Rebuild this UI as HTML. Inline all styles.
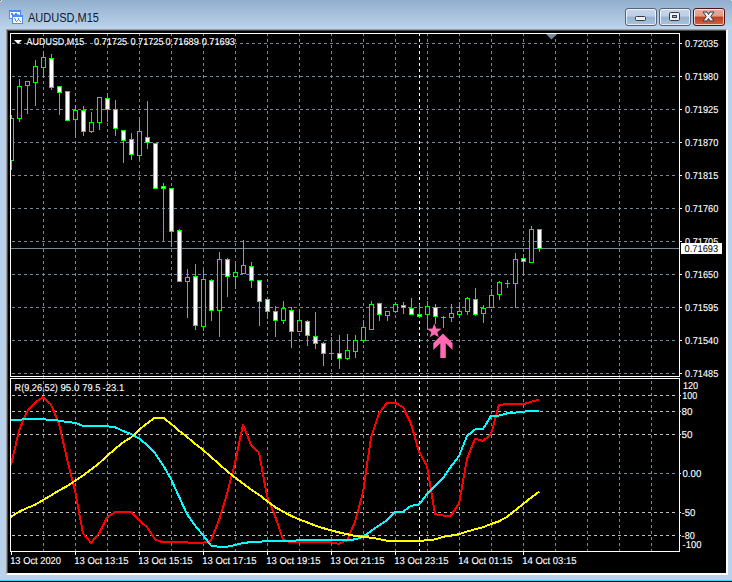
<!DOCTYPE html>
<html><head><meta charset="utf-8"><style>
html,body{margin:0;padding:0;}
body{width:732px;height:582px;overflow:hidden;position:relative;background:#b9d1ea;font-family:"Liberation Sans",sans-serif;}
#title{position:absolute;left:0;top:0;width:732px;height:29px;background:linear-gradient(#92aece,#bcd4ec);}
#ttext{position:absolute;left:28px;top:9px;font-size:12px;color:#1e2a44;letter-spacing:0.2px;}
#frame{position:absolute;left:6px;top:29px;width:719px;height:543px;border-top:1px solid #9a9a9a;border-left:1px solid #9a9a9a;border-right:2px solid #fff;border-bottom:2px solid #fff;background:#000;box-sizing:content-box;box-shadow:inset 1px 1px 0 #4a4a4a;}
.btn{position:absolute;top:8px;width:30px;height:16px;border:1px solid #56627c;border-radius:3px;box-shadow:inset 0 0 0 1px rgba(255,255,255,0.7);background:linear-gradient(#c6d7ea 0%,#bccfe6 45%,#98b2cf 50%,#a9c2dc 100%);}
#bclose{border-color:#4e1418;background:linear-gradient(#eaac9c 0%,#e29a88 45%,#c0401f 50%,#d06448 100%);}
#bottom1{position:absolute;left:0;top:580px;width:732px;height:1px;background:#34d6ee;}
#bottom2{position:absolute;left:0;top:581px;width:732px;height:1px;background:#000;}
</style></head><body>
<div id="title"></div>
<svg style="position:absolute;left:0;top:0" width="30" height="30" shape-rendering="crispEdges">
<rect x="9" y="10" width="12" height="9" fill="#4b8cf2"/>
<rect x="10" y="12" width="10" height="6" fill="#fffff4"/>
<rect x="11" y="13" width="2" height="2" fill="#4b8cf2"/><rect x="15" y="13" width="2" height="2" fill="#4b8cf2"/><rect x="13" y="14" width="2" height="1" fill="#8fb6f2"/><rect x="17" y="14" width="2" height="1" fill="#8fb6f2"/>
<rect x="12" y="15" width="11" height="9" fill="#4b8cf2"/>
<rect x="13" y="17" width="9" height="6" fill="#ffffff"/>
<path d="M14 18h1v1h1v2h1v-1h1v-2h1v2h1v1h1v1h-1v-1h-1v-1h-1v1h-1v1h-1v-1h-1v-2h-1z" fill="#4b8cf2"/>
</svg>
<svg style="position:absolute;left:0;top:0" width="120" height="29"><text x="28" y="22" font-family="Liberation Sans, sans-serif" font-size="12.4" fill="#0c1a30" textLength="71" lengthAdjust="spacingAndGlyphs">AUDUSD,M15</text></svg>
<div class="btn" style="left:625px"><svg width="30" height="16" style="position:absolute;left:0;top:0"><rect x="9.5" y="7.5" width="10" height="4" rx="1" fill="#f0f0f0" stroke="#343c4e"/></svg></div>
<div class="btn" style="left:659px"><svg width="30" height="16" style="position:absolute;left:0;top:0"><rect x="9.5" y="3.5" width="10" height="8" rx="1.2" fill="#f0f0f0" stroke="#343c4e"/><rect x="12.5" y="6.5" width="4" height="2" fill="#9bb3d0" stroke="#343c4e"/></svg></div>
<div class="btn" id="bclose" style="left:693px"><svg width="30" height="16" style="position:absolute;left:0;top:0"><polygon points="9,3 13,3 14.5,5.5 16,3 20,3 16.7,7.5 20,12 16,12 14.5,9.5 13,12 9,12 12.3,7.5" fill="#f2f2f2" stroke="#2e3a4e" stroke-width="1" stroke-linejoin="round"/></svg></div>
<div id="frame"></div>
<svg width="718" height="542" viewBox="7 30 718 542" style="position:absolute;left:7px;top:30px"><defs><clipPath id="cm"><rect x="11" y="34" width="668" height="342"/></clipPath><clipPath id="ci"><rect x="11" y="379" width="668" height="172"/></clipPath></defs><g stroke="#778899" stroke-width="1" stroke-dasharray="3 3" shape-rendering="crispEdges"><line x1="12" y1="43.5" x2="678" y2="43.5"/><line x1="12" y1="76.5" x2="678" y2="76.5"/><line x1="12" y1="109.5" x2="678" y2="109.5"/><line x1="12" y1="142.5" x2="678" y2="142.5"/><line x1="12" y1="175.5" x2="678" y2="175.5"/><line x1="12" y1="208.5" x2="678" y2="208.5"/><line x1="12" y1="241.5" x2="678" y2="241.5"/><line x1="12" y1="274.5" x2="678" y2="274.5"/><line x1="12" y1="307.5" x2="678" y2="307.5"/><line x1="12" y1="340.5" x2="678" y2="340.5"/><line x1="12" y1="373.5" x2="678" y2="373.5"/><line x1="43.5" y1="33" x2="43.5" y2="551"/><line x1="75.5" y1="33" x2="75.5" y2="551"/><line x1="107.5" y1="33" x2="107.5" y2="551"/><line x1="139.5" y1="33" x2="139.5" y2="551"/><line x1="171.5" y1="33" x2="171.5" y2="551"/><line x1="203.5" y1="33" x2="203.5" y2="551"/><line x1="235.5" y1="33" x2="235.5" y2="551"/><line x1="267.5" y1="33" x2="267.5" y2="551"/><line x1="299.5" y1="33" x2="299.5" y2="551"/><line x1="331.5" y1="33" x2="331.5" y2="551"/><line x1="363.5" y1="33" x2="363.5" y2="551"/><line x1="395.5" y1="33" x2="395.5" y2="551"/><line x1="427.5" y1="33" x2="427.5" y2="551"/><line x1="459.5" y1="33" x2="459.5" y2="551"/><line x1="491.5" y1="33" x2="491.5" y2="551"/><line x1="523.5" y1="33" x2="523.5" y2="551"/><line x1="555.5" y1="33" x2="555.5" y2="551"/><line x1="587.5" y1="33" x2="587.5" y2="551"/><line x1="619.5" y1="33" x2="619.5" y2="551"/><line x1="651.5" y1="33" x2="651.5" y2="551"/></g><g stroke="#778899" stroke-width="1" stroke-dasharray="3 3" shape-rendering="crispEdges"><line x1="12" y1="473.5" x2="678" y2="473.5"/></g><g stroke="#c0c0c0" stroke-width="1" stroke-dasharray="3 3" shape-rendering="crispEdges"><line x1="12" y1="395.5" x2="678" y2="395.5"/><line x1="12" y1="411.5" x2="678" y2="411.5"/><line x1="12" y1="434.5" x2="678" y2="434.5"/><line x1="12" y1="512.5" x2="678" y2="512.5"/><line x1="12" y1="535.5" x2="678" y2="535.5"/></g><g stroke="#ffffff" stroke-width="1" stroke-dasharray="3 3" shape-rendering="crispEdges"><line x1="419.5" y1="33" x2="419.5" y2="376"/><line x1="419.5" y1="381" x2="419.5" y2="551"/></g><line x1="11" y1="248.5" x2="679" y2="248.5" stroke="#778899" stroke-width="1" shape-rendering="crispEdges"/><polygon points="546,34 557,34 551.5,39.5" fill="#778899"/><g clip-path="url(#cm)" shape-rendering="crispEdges"><rect x="11" y="115" width="1" height="55" fill="#00ff00"/><rect x="9.5" y="118.5" width="4" height="42" fill="#000000" stroke="#00ff00" stroke-width="1"/><rect x="19" y="79" width="1" height="43" fill="#00ff00"/><rect x="17.5" y="86.5" width="4" height="32" fill="#000000" stroke="#00ff00" stroke-width="1"/><rect x="27" y="81" width="1" height="33" fill="#00ff00"/><rect x="25.5" y="81.5" width="4" height="4" fill="#000000" stroke="#00ff00" stroke-width="1"/><rect x="35" y="60" width="1" height="46" fill="#00ff00"/><rect x="33.5" y="66.5" width="4" height="16" fill="#000000" stroke="#00ff00" stroke-width="1"/><rect x="43" y="51" width="1" height="27" fill="#00ff00"/><rect x="41.5" y="57.5" width="4" height="10" fill="#000000" stroke="#00ff00" stroke-width="1"/><rect x="51" y="54" width="1" height="36" fill="#00ff00"/><rect x="49.5" y="58.5" width="4" height="29" fill="#ffffff" stroke="#00ff00" stroke-width="1"/><rect x="59" y="86" width="1" height="29" fill="#00ff00"/><rect x="57.5" y="86.5" width="4" height="6" fill="#ffffff" stroke="#00ff00" stroke-width="1"/><rect x="67" y="91" width="1" height="30" fill="#00ff00"/><rect x="65.5" y="91.5" width="4" height="29" fill="#ffffff" stroke="#00ff00" stroke-width="1"/><rect x="75" y="105" width="1" height="33" fill="#00ff00"/><rect x="73.5" y="110.5" width="4" height="9" fill="#000000" stroke="#00ff00" stroke-width="1"/><rect x="83" y="106" width="1" height="30" fill="#00ff00"/><rect x="81.5" y="110.5" width="4" height="21" fill="#ffffff" stroke="#00ff00" stroke-width="1"/><rect x="91" y="112" width="1" height="21" fill="#00ff00"/><rect x="89.5" y="122.5" width="4" height="9" fill="#000000" stroke="#00ff00" stroke-width="1"/><rect x="99" y="97" width="1" height="33" fill="#00ff00"/><rect x="97.5" y="97.5" width="4" height="25" fill="#000000" stroke="#00ff00" stroke-width="1"/><rect x="107" y="93" width="1" height="29" fill="#00ff00"/><rect x="105.5" y="98.5" width="4" height="11" fill="#ffffff" stroke="#00ff00" stroke-width="1"/><rect x="115" y="100" width="1" height="36" fill="#00ff00"/><rect x="113.5" y="109.5" width="4" height="19" fill="#ffffff" stroke="#00ff00" stroke-width="1"/><rect x="123" y="130" width="1" height="33" fill="#00ff00"/><rect x="121.5" y="130.5" width="4" height="10" fill="#ffffff" stroke="#00ff00" stroke-width="1"/><rect x="131" y="133" width="1" height="27" fill="#00ff00"/><rect x="129.5" y="139.5" width="4" height="15" fill="#ffffff" stroke="#00ff00" stroke-width="1"/><rect x="139" y="117" width="1" height="43" fill="#00ff00"/><rect x="137.5" y="131.5" width="4" height="24" fill="#000000" stroke="#00ff00" stroke-width="1"/><rect x="147" y="101" width="1" height="48" fill="#00ff00"/><rect x="145.5" y="137.5" width="4" height="5" fill="#ffffff" stroke="#00ff00" stroke-width="1"/><rect x="155" y="143" width="1" height="46" fill="#00ff00"/><rect x="153.5" y="143.5" width="4" height="45" fill="#ffffff" stroke="#00ff00" stroke-width="1"/><rect x="163" y="183" width="1" height="58" fill="#00ff00"/><rect x="161.5" y="186.5" width="4" height="2" fill="#ffffff" stroke="#00ff00" stroke-width="1"/><rect x="171" y="188" width="1" height="59" fill="#00ff00"/><rect x="169.5" y="188.5" width="4" height="43" fill="#ffffff" stroke="#00ff00" stroke-width="1"/><rect x="179" y="229" width="1" height="53" fill="#00ff00"/><rect x="177.5" y="230.5" width="4" height="51" fill="#ffffff" stroke="#00ff00" stroke-width="1"/><rect x="187" y="269" width="1" height="49" fill="#00ff00"/><rect x="185.5" y="277.5" width="4" height="4" fill="#000000" stroke="#00ff00" stroke-width="1"/><rect x="195" y="264" width="1" height="66" fill="#00ff00"/><rect x="193.5" y="276.5" width="4" height="49" fill="#ffffff" stroke="#00ff00" stroke-width="1"/><rect x="203" y="270" width="1" height="61" fill="#00ff00"/><rect x="201.5" y="279.5" width="4" height="47" fill="#000000" stroke="#00ff00" stroke-width="1"/><rect x="211" y="279" width="1" height="42" fill="#00ff00"/><rect x="209.5" y="280.5" width="4" height="30" fill="#ffffff" stroke="#00ff00" stroke-width="1"/><rect x="219" y="252" width="1" height="85" fill="#00ff00"/><rect x="217.5" y="259.5" width="4" height="51" fill="#000000" stroke="#00ff00" stroke-width="1"/><rect x="227" y="258" width="1" height="39" fill="#00ff00"/><rect x="225.5" y="259.5" width="4" height="17" fill="#ffffff" stroke="#00ff00" stroke-width="1"/><rect x="235" y="264" width="1" height="25" fill="#00ff00"/><rect x="233.5" y="272.5" width="4" height="4" fill="#000000" stroke="#00ff00" stroke-width="1"/><rect x="243" y="240" width="1" height="34" fill="#00ff00"/><rect x="241.5" y="265.5" width="4" height="8" fill="#000000" stroke="#00ff00" stroke-width="1"/><rect x="251" y="262" width="1" height="26" fill="#00ff00"/><rect x="249.5" y="266.5" width="4" height="14" fill="#ffffff" stroke="#00ff00" stroke-width="1"/><rect x="259" y="280" width="1" height="46" fill="#00ff00"/><rect x="257.5" y="280.5" width="4" height="21" fill="#ffffff" stroke="#00ff00" stroke-width="1"/><rect x="267" y="297" width="1" height="22" fill="#00ff00"/><rect x="265.5" y="299.5" width="4" height="12" fill="#ffffff" stroke="#00ff00" stroke-width="1"/><rect x="275" y="306" width="1" height="31" fill="#00ff00"/><rect x="273.5" y="311.5" width="4" height="9" fill="#ffffff" stroke="#00ff00" stroke-width="1"/><rect x="283" y="301" width="1" height="23" fill="#00ff00"/><rect x="281.5" y="308.5" width="4" height="12" fill="#000000" stroke="#00ff00" stroke-width="1"/><rect x="291" y="307" width="1" height="41" fill="#00ff00"/><rect x="289.5" y="310.5" width="4" height="21" fill="#ffffff" stroke="#00ff00" stroke-width="1"/><rect x="299" y="309" width="1" height="23" fill="#00ff00"/><rect x="297.5" y="320.5" width="4" height="11" fill="#000000" stroke="#00ff00" stroke-width="1"/><rect x="307" y="320" width="1" height="26" fill="#00ff00"/><rect x="305.5" y="321.5" width="4" height="14" fill="#ffffff" stroke="#00ff00" stroke-width="1"/><rect x="315" y="312" width="1" height="37" fill="#00ff00"/><rect x="313.5" y="336.5" width="4" height="7" fill="#ffffff" stroke="#00ff00" stroke-width="1"/><rect x="323" y="342" width="1" height="24" fill="#00ff00"/><rect x="321.5" y="343.5" width="4" height="10" fill="#ffffff" stroke="#00ff00" stroke-width="1"/><rect x="331" y="337" width="1" height="23" fill="#00ff00"/><rect x="329" y="353" width="5" height="1" fill="#00ff00"/><rect x="339" y="335" width="1" height="34" fill="#00ff00"/><rect x="337.5" y="353.5" width="4" height="5" fill="#ffffff" stroke="#00ff00" stroke-width="1"/><rect x="347" y="334" width="1" height="26" fill="#00ff00"/><rect x="345.5" y="350.5" width="4" height="8" fill="#000000" stroke="#00ff00" stroke-width="1"/><rect x="355" y="335" width="1" height="23" fill="#00ff00"/><rect x="353.5" y="340.5" width="4" height="11" fill="#000000" stroke="#00ff00" stroke-width="1"/><rect x="363" y="320" width="1" height="23" fill="#00ff00"/><rect x="361.5" y="327.5" width="4" height="13" fill="#000000" stroke="#00ff00" stroke-width="1"/><rect x="371" y="301" width="1" height="29" fill="#00ff00"/><rect x="369.5" y="304.5" width="4" height="25" fill="#000000" stroke="#00ff00" stroke-width="1"/><rect x="379" y="303" width="1" height="18" fill="#00ff00"/><rect x="377.5" y="303.5" width="4" height="11" fill="#ffffff" stroke="#00ff00" stroke-width="1"/><rect x="387" y="311" width="1" height="10" fill="#00ff00"/><rect x="385.5" y="311.5" width="4" height="4" fill="#000000" stroke="#00ff00" stroke-width="1"/><rect x="395" y="302" width="1" height="11" fill="#00ff00"/><rect x="393.5" y="304.5" width="4" height="7" fill="#000000" stroke="#00ff00" stroke-width="1"/><rect x="403" y="302" width="1" height="12" fill="#00ff00"/><rect x="401.5" y="305.5" width="4" height="2" fill="#ffffff" stroke="#00ff00" stroke-width="1"/><rect x="411" y="298" width="1" height="17" fill="#00ff00"/><rect x="409.5" y="308.5" width="4" height="6" fill="#ffffff" stroke="#00ff00" stroke-width="1"/><rect x="419" y="304" width="1" height="14" fill="#00ff00"/><rect x="417.5" y="314.5" width="4" height="2" fill="#ffffff" stroke="#00ff00" stroke-width="1"/><rect x="427" y="301" width="1" height="28" fill="#00ff00"/><rect x="425.5" y="306.5" width="4" height="8" fill="#000000" stroke="#00ff00" stroke-width="1"/><rect x="435" y="304" width="1" height="20" fill="#00ff00"/><rect x="433.5" y="307.5" width="4" height="9" fill="#ffffff" stroke="#00ff00" stroke-width="1"/><rect x="443" y="316" width="1" height="12" fill="#00ff00"/><rect x="441" y="317" width="5" height="1" fill="#00ff00"/><rect x="451" y="304" width="1" height="18" fill="#00ff00"/><rect x="449.5" y="313.5" width="4" height="4" fill="#000000" stroke="#00ff00" stroke-width="1"/><rect x="459" y="302" width="1" height="15" fill="#00ff00"/><rect x="457.5" y="311.5" width="4" height="3" fill="#000000" stroke="#00ff00" stroke-width="1"/><rect x="467" y="297" width="1" height="18" fill="#00ff00"/><rect x="465.5" y="298.5" width="4" height="13" fill="#000000" stroke="#00ff00" stroke-width="1"/><rect x="475" y="288" width="1" height="28" fill="#00ff00"/><rect x="473.5" y="299.5" width="4" height="15" fill="#ffffff" stroke="#00ff00" stroke-width="1"/><rect x="483" y="305" width="1" height="18" fill="#00ff00"/><rect x="481.5" y="308.5" width="4" height="5" fill="#000000" stroke="#00ff00" stroke-width="1"/><rect x="491" y="289" width="1" height="19" fill="#00ff00"/><rect x="489.5" y="295.5" width="4" height="12" fill="#000000" stroke="#00ff00" stroke-width="1"/><rect x="499" y="281" width="1" height="19" fill="#00ff00"/><rect x="497.5" y="282.5" width="4" height="12" fill="#000000" stroke="#00ff00" stroke-width="1"/><rect x="507" y="280" width="1" height="8" fill="#00ff00"/><rect x="505" y="283" width="5" height="1" fill="#00ff00"/><rect x="515" y="253" width="1" height="55" fill="#00ff00"/><rect x="513.5" y="259.5" width="4" height="24" fill="#000000" stroke="#00ff00" stroke-width="1"/><rect x="523" y="254" width="1" height="22" fill="#00ff00"/><rect x="521.5" y="258.5" width="4" height="3" fill="#ffffff" stroke="#00ff00" stroke-width="1"/><rect x="531" y="226" width="1" height="37" fill="#00ff00"/><rect x="529.5" y="229.5" width="4" height="33" fill="#000000" stroke="#00ff00" stroke-width="1"/><rect x="539" y="229" width="1" height="23" fill="#00ff00"/><rect x="537.5" y="229.5" width="4" height="19" fill="#ffffff" stroke="#00ff00" stroke-width="1"/></g><polygon points="434.30,323.60 436.18,328.61 441.53,328.85 437.34,332.19 438.77,337.35 434.30,334.40 429.83,337.35 431.26,332.19 427.07,328.85 432.42,328.61" fill="#ff69b4"/><polygon points="443,333.5 452.5,343 452.5,350 445.8,343.3 445.8,358 440.3,358 440.3,343.3 433.3,350 433.3,343" fill="#ff69b4"/><g clip-path="url(#ci)" fill="none" stroke-width="2" stroke-linejoin="round" shape-rendering="crispEdges"><path d="M11.0,465.0 L19.0,430.7 L27.0,411.5 L35.0,402.7 L43.0,397.0 L51.0,404.5 L59.0,423.7 L67.0,458.7 L75.0,490.5 L83.0,533.3 L91.0,542.9 L99.0,533.3 L107.0,517.6 L115.0,512.3 L123.0,511.8 L131.0,512.3 L139.0,520.2 L147.0,527.2 L155.0,539.4 L163.0,542.4 L171.0,542.4 L179.0,542.4 L187.0,542.4 L195.0,543.4 L203.0,542.9 L211.0,540.3 L219.0,520.2 L227.0,494.0 L235.0,463.0 L243.0,424.6 L251.0,445.0 L259.0,452.5 L267.0,496.0 L275.0,516.0 L283.0,539.4 L291.0,542.4 L299.0,542.4 L307.0,542.4 L315.0,542.4 L323.0,542.4 L331.0,542.4 L339.0,543.8 L347.0,540.3 L355.0,522.0 L363.0,492.2 L371.0,437.7 L379.0,413.2 L387.0,402.7 L395.0,402.7 L403.0,407.1 L411.0,423.7 L419.0,451.7 L427.0,466.0 L435.0,514.1 L443.0,515.5 L451.0,515.5 L459.0,503.6 L467.0,459.0 L475.0,438.6 L483.0,441.0 L491.0,434.3 L499.0,404.7 L507.0,404.3 L515.0,404.3 L523.0,404.3 L531.0,401.8 L539.0,399.8" stroke="#ff0000"/><path d="M11.0,420.2 L19.0,419.9 L27.0,418.8 L35.0,418.8 L43.0,419.3 L51.0,419.9 L59.0,420.6 L67.0,422.0 L75.0,422.8 L83.0,425.8 L91.0,425.8 L99.0,425.8 L107.0,426.3 L115.0,427.2 L123.0,431.0 L131.0,434.0 L139.0,438.6 L147.0,444.7 L155.0,453.4 L163.0,465.0 L171.0,479.1 L179.0,496.6 L187.0,514.1 L195.0,525.4 L203.0,535.1 L211.0,545.5 L219.0,546.8 L227.0,546.8 L235.0,545.0 L243.0,542.9 L251.0,542.2 L259.0,542.0 L267.0,540.8 L275.0,540.8 L283.0,540.8 L291.0,540.8 L299.0,540.3 L307.0,540.3 L315.0,540.0 L323.0,540.0 L331.0,540.0 L339.0,540.0 L347.0,540.0 L355.0,539.4 L363.0,536.8 L371.0,531.0 L379.0,525.4 L387.0,520.2 L395.0,512.3 L403.0,511.5 L411.0,505.9 L419.0,504.5 L427.0,494.0 L435.0,486.1 L443.0,478.2 L451.0,466.5 L459.0,456.0 L467.0,436.0 L475.0,429.5 L483.0,429.0 L491.0,416.0 L499.0,415.6 L507.0,413.4 L515.0,412.6 L523.0,411.8 L531.0,410.8 L539.0,410.8" stroke="#00ffff"/><path d="M11.0,516.7 L19.0,511.8 L27.0,508.0 L35.0,504.8 L43.0,500.1 L51.0,495.4 L59.0,490.5 L67.0,486.1 L75.0,480.9 L83.0,475.6 L91.0,469.5 L99.0,463.4 L107.0,456.0 L115.0,449.0 L123.0,442.5 L131.0,437.5 L139.0,429.8 L147.0,423.4 L155.0,417.6 L163.0,417.6 L171.0,423.7 L179.0,430.7 L187.0,436.8 L195.0,443.8 L203.0,449.9 L211.0,456.9 L219.0,463.9 L227.0,471.2 L235.0,477.4 L243.0,483.5 L251.0,489.6 L259.0,494.8 L267.0,501.0 L275.0,507.1 L283.0,511.5 L291.0,515.8 L299.0,519.3 L307.0,522.3 L315.0,525.4 L323.0,528.1 L331.0,530.3 L339.0,532.4 L347.0,534.2 L355.0,535.9 L363.0,536.8 L371.0,537.7 L379.0,539.1 L387.0,540.8 L395.0,540.8 L403.0,540.8 L411.0,540.8 L419.0,540.8 L427.0,540.3 L435.0,539.4 L443.0,536.8 L451.0,535.6 L459.0,534.2 L467.0,531.6 L475.0,529.3 L483.0,527.2 L491.0,524.0 L499.0,521.3 L507.0,516.9 L515.0,510.5 L523.0,504.1 L531.0,497.7 L539.0,491.8" stroke="#ffff00"/></g><g stroke="#ffffff" stroke-width="1" fill="none" shape-rendering="crispEdges"><rect x="10.5" y="33.5" width="669" height="343"/><rect x="10.5" y="378.5" width="669" height="173"/></g><g stroke="#ffffff" stroke-width="1" shape-rendering="crispEdges"><line x1="679" y1="43.5" x2="682" y2="43.5"/><line x1="679" y1="76.5" x2="682" y2="76.5"/><line x1="679" y1="109.5" x2="682" y2="109.5"/><line x1="679" y1="142.5" x2="682" y2="142.5"/><line x1="679" y1="175.5" x2="682" y2="175.5"/><line x1="679" y1="208.5" x2="682" y2="208.5"/><line x1="679" y1="241.5" x2="682" y2="241.5"/><line x1="679" y1="274.5" x2="682" y2="274.5"/><line x1="679" y1="307.5" x2="682" y2="307.5"/><line x1="679" y1="340.5" x2="682" y2="340.5"/><line x1="679" y1="373.5" x2="682" y2="373.5"/><line x1="679" y1="395.5" x2="681" y2="395.5"/><line x1="679" y1="411.5" x2="681" y2="411.5"/><line x1="679" y1="434.5" x2="681" y2="434.5"/><line x1="679" y1="473.5" x2="681" y2="473.5"/><line x1="679" y1="512.5" x2="681" y2="512.5"/><line x1="679" y1="535.5" x2="681" y2="535.5"/><line x1="11.5" y1="551" x2="11.5" y2="555"/><line x1="75.5" y1="551" x2="75.5" y2="555"/><line x1="139.5" y1="551" x2="139.5" y2="555"/><line x1="203.5" y1="551" x2="203.5" y2="555"/><line x1="267.5" y1="551" x2="267.5" y2="555"/><line x1="331.5" y1="551" x2="331.5" y2="555"/><line x1="395.5" y1="551" x2="395.5" y2="555"/><line x1="459.5" y1="551" x2="459.5" y2="555"/><line x1="523.5" y1="551" x2="523.5" y2="555"/></g><polygon points="14,40 22,40 18,44" fill="#ffffff"/><g font-family="Liberation Sans, sans-serif" text-rendering="geometricPrecision" stroke="#ffffff" stroke-width="0.12"><text x="685.1" y="47" fill="#ffffff" font-size="10" textLength="33.2" lengthAdjust="spacingAndGlyphs">0.72035</text><text x="685.1" y="80" fill="#ffffff" font-size="10" textLength="33.2" lengthAdjust="spacingAndGlyphs">0.71980</text><text x="685.1" y="113" fill="#ffffff" font-size="10" textLength="33.2" lengthAdjust="spacingAndGlyphs">0.71925</text><text x="685.1" y="146" fill="#ffffff" font-size="10" textLength="33.2" lengthAdjust="spacingAndGlyphs">0.71870</text><text x="685.1" y="179" fill="#ffffff" font-size="10" textLength="33.2" lengthAdjust="spacingAndGlyphs">0.71815</text><text x="685.1" y="212" fill="#ffffff" font-size="10" textLength="33.2" lengthAdjust="spacingAndGlyphs">0.71760</text><text x="685.1" y="245" fill="#ffffff" font-size="10" textLength="33.2" lengthAdjust="spacingAndGlyphs">0.71705</text><text x="685.1" y="278" fill="#ffffff" font-size="10" textLength="33.2" lengthAdjust="spacingAndGlyphs">0.71650</text><text x="685.1" y="311" fill="#ffffff" font-size="10" textLength="33.2" lengthAdjust="spacingAndGlyphs">0.71595</text><text x="685.1" y="344" fill="#ffffff" font-size="10" textLength="33.2" lengthAdjust="spacingAndGlyphs">0.71540</text><text x="685.1" y="377" fill="#ffffff" font-size="10" textLength="33.2" lengthAdjust="spacingAndGlyphs">0.71485</text><text x="682.9" y="389" fill="#ffffff" font-size="10" textLength="15.3" lengthAdjust="spacingAndGlyphs">120</text><text x="682.2" y="399" fill="#ffffff" font-size="10" textLength="15" lengthAdjust="spacingAndGlyphs">100</text><text x="681.6" y="415" fill="#ffffff" font-size="10" textLength="11" lengthAdjust="spacingAndGlyphs">80</text><text x="681.6" y="438" fill="#ffffff" font-size="10" textLength="11" lengthAdjust="spacingAndGlyphs">50</text><text x="682.5" y="477" fill="#ffffff" font-size="10" textLength="18.8" lengthAdjust="spacingAndGlyphs">0.00</text><text x="681.6" y="516" fill="#ffffff" font-size="10" textLength="13.8" lengthAdjust="spacingAndGlyphs">-50</text><text x="681.6" y="539" fill="#ffffff" font-size="10" textLength="13.2" lengthAdjust="spacingAndGlyphs">-80</text><text x="682.6" y="548" fill="#ffffff" font-size="10" textLength="18.8" lengthAdjust="spacingAndGlyphs">-100</text><text x="10.2" y="564" fill="#ffffff" font-size="10" textLength="50.8" lengthAdjust="spacingAndGlyphs">13 Oct 2020</text><text x="74.2" y="564" fill="#ffffff" font-size="10" textLength="54.4" lengthAdjust="spacingAndGlyphs">13 Oct 13:15</text><text x="138.2" y="564" fill="#ffffff" font-size="10" textLength="54.4" lengthAdjust="spacingAndGlyphs">13 Oct 15:15</text><text x="202.2" y="564" fill="#ffffff" font-size="10" textLength="54.4" lengthAdjust="spacingAndGlyphs">13 Oct 17:15</text><text x="266.2" y="564" fill="#ffffff" font-size="10" textLength="54.4" lengthAdjust="spacingAndGlyphs">13 Oct 19:15</text><text x="330.2" y="564" fill="#ffffff" font-size="10" textLength="54.4" lengthAdjust="spacingAndGlyphs">13 Oct 21:15</text><text x="394.2" y="564" fill="#ffffff" font-size="10" textLength="54.4" lengthAdjust="spacingAndGlyphs">13 Oct 23:15</text><text x="458.2" y="564" fill="#ffffff" font-size="10" textLength="54.4" lengthAdjust="spacingAndGlyphs">14 Oct 01:15</text><text x="522.2" y="564" fill="#ffffff" font-size="10" textLength="54.4" lengthAdjust="spacingAndGlyphs">14 Oct 03:15</text><text x="26.6" y="45" fill="#ffffff" font-size="10" textLength="57.6" lengthAdjust="spacingAndGlyphs">AUDUSD,M15</text><text x="94" y="45" fill="#ffffff" font-size="10" textLength="33.2" lengthAdjust="spacingAndGlyphs">0.71725</text><text x="130.4" y="45" fill="#ffffff" font-size="10" textLength="33.2" lengthAdjust="spacingAndGlyphs">0.71725</text><text x="165.6" y="45" fill="#ffffff" font-size="10" textLength="33.2" lengthAdjust="spacingAndGlyphs">0.71689</text><text x="201.7" y="45" fill="#ffffff" font-size="10" textLength="33.2" lengthAdjust="spacingAndGlyphs">0.71693</text><text x="14.6" y="391" fill="#ffffff" font-size="10" textLength="43.2" lengthAdjust="spacingAndGlyphs">R(9,26,52)</text><text x="60.5" y="391" fill="#ffffff" font-size="10" textLength="18.8" lengthAdjust="spacingAndGlyphs">95.0</text><text x="82.3" y="391" fill="#ffffff" font-size="10" textLength="18.1" lengthAdjust="spacingAndGlyphs">79.5</text><text x="102.6" y="391" fill="#ffffff" font-size="10" textLength="21.6" lengthAdjust="spacingAndGlyphs">-23.1</text></g><rect x="681" y="243" width="41" height="11" fill="#ffffff"/><text x="684.6" y="252" fill="#000000" font-size="10" text-rendering="geometricPrecision" font-family="Liberation Sans, sans-serif" textLength="33.6" lengthAdjust="spacingAndGlyphs">0.71693</text></svg>
<div id="bottom1"></div><div id="bottom2"></div>
<svg style="position:absolute;left:0;top:0" width="732" height="3" shape-rendering="crispEdges"><rect x="0" y="0" width="1" height="1" fill="#6a6a6a"/><rect x="1" y="0" width="1" height="1" fill="#e8e8e4"/><rect x="0" y="1" width="1" height="1" fill="#e8e8e4"/><rect x="1" y="1" width="1" height="1" fill="#a9bcd4"/><rect x="731" y="0" width="1" height="1" fill="#dff6f8"/></svg>
</body></html>
